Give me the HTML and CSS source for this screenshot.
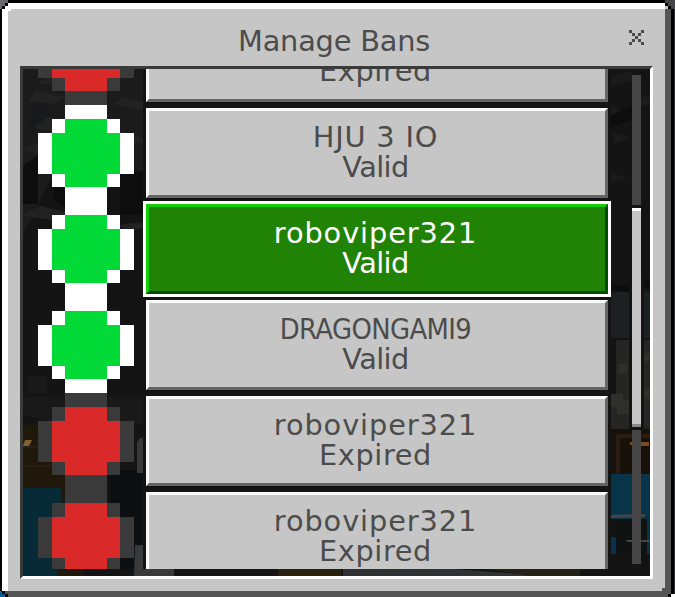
FILE: index.html
```html
<!DOCTYPE html>
<html lang="en">
<head>
<meta charset="utf-8">
<title>Manage Bans</title>
<link rel="stylesheet" href="styles.css">
</head>
<body>
<svg class="symbols" width="0" height="0" aria-hidden="true">
  <symbol id="status" viewBox="0 0 96 96">
    <path fill="var(--edge)" d="M27 0H69V14H82V28H96V69H82V82H69V96H27V82H14V69H0V28H14V14H27Z"/>
    <path fill="var(--dot)" d="M27 14H69V28H82V69H69V82H27V69H14V28H27Z"/>
  </symbol>
</svg>
<main class="dialog">
  <svg class="corners" viewBox="0 0 675 597" shape-rendering="crispEdges" aria-hidden="true">
    <path fill="#68686c" d="M0 0H8V3H5V6H2V9H0Z"/>
    <path fill="#000" d="M5 3H8V6H5ZM2 6H5V9H2Z"/>
    <path fill="#fff" d="M8 9H11V11H8Z"/>
    <path fill="#464648" d="M665 0H675V9H671V6H668V3H665Z"/>
    <path fill="#000" d="M665 3H668V6H671V9H668V6H665Z"/>
    <path fill="#c6c6c6" d="M665 6H668V9H665Z"/>
    <path fill="#005f9b" d="M0 591H5V597H0Z"/>
    <path fill="#555" d="M5 591H8V594H5Z"/>
    <path fill="#000" d="M2 591H5V594H8V597H5V594H2Z"/>
    <path fill="#555" d="M662 588H665V591H662Z"/>
    <path fill="#000" d="M668 594H671V597H668Z"/>
    <path fill="#fff" d="M671 594H675V597H671Z"/>
  </svg>
  <header class="titlebar">
    <h1 class="title">Manage Bans</h1>
    <svg class="close" viewBox="0 0 5 5" shape-rendering="crispEdges" role="img" aria-label="Close"><path fill="#4c4c4c" d="M0 0h1v1H0zM4 0h1v1H4zM1 1h1v1H1zM3 1h1v1H3zM2 2h1v1H2zM1 3h1v1H1zM3 3h1v1H3zM0 4h1v1H0zM4 4h1v1H4z"/></svg>
  </header>
  <section class="frame">
    <svg class="scene" viewBox="23 69 627 507" aria-hidden="true">
      <path fill="#141414" d="M23 69H650V576H23Z"/>
      <path fill="#1b1b1b" d="M23 69H143V172L67 145L23 235Z"/>
      <path fill="#222" d="M38 84L54 72L83 77L71 86ZM28 101L36 91L66 97L53 104ZM32 128L47 116L65 122L58 132ZM23 150L38 142L62 148L50 158ZM112 104L125 97L143 102V110ZM111 130L143 137V144L120 139ZM25 214L41 206L65 212V222L23 216ZM117 225L143 222V228L128 231Z"/>
      <path fill="#18191c" d="M26 119L39 103L55 111L32 129Z"/>
      <path fill="#0d0d0d" d="M23 166L38 155V204H23ZM120 172H143V215H120ZM54 187H65V208L54 201Z"/>
      <path fill="#191919" d="M28 376H47V393H28ZM43 333H56V345H43ZM23 397H65V424L23 415ZM107 397H143V425L107 420Z"/>
      <path fill="#21180c" d="M23 425H65V495H84V576H57V488H23Z"/>
      <path fill="#292015" d="M23 446H65V448H23ZM23 465H65V467H23Z"/>
      <path fill="#80602d" d="M25 440H32L29 446H23Z"/>
      <path fill="#062b36" d="M23 488H61V551L57 576H23Z"/>
      <path fill="#0c0f12" d="M110 470H143V569H110Z"/>
      <path fill="#393939" d="M137 443L140 438H143V473H137ZM135 545H143V569H174V576H134Z"/>
      <path fill="#27200f" d="M278 569H341V576H278Z"/>
      <path fill="#303333" d="M343 569H455L545 576H343Z"/>
      <path fill="#232018" d="M486 569H580V576H530Z"/>
      <path fill="#1b1b1b" d="M611 76L632 71V81L611 86ZM611 106L623 111L611 115ZM611 132L632 137L614 144ZM611 172L627 178L611 182ZM641 98L650 94V105H641Z"/>
      <path fill="#0d0d0d" d="M611 115L632 105V120L611 127ZM611 285H629V292L611 290ZM641 279H650V288H641Z"/>
      <path fill="#1d2021" d="M611 292H650V338H611Z"/>
      <path fill="#252523" d="M616 340H650V429H611V395H616Z"/>
      <path fill="#2f2f2d" d="M611 394H623V400H629V414H617V407H611ZM619 364H627V373H619ZM641 353H650V361H641ZM641 389H650V399H641Z"/>
      <path fill="#17110a" d="M611 429H650V475H611Z"/>
      <path fill="#2a1d12" d="M616 434H650V438H620V473H616Z"/>
      <path fill="#7c4a20" d="M630 442H649V446H641V450H637V445H630Z"/>
      <path fill="#073449" d="M611 474H650V554H611Z"/>
      <path fill="#111312" d="M611 519H647V569H641V554H616V537H611Z"/>
      <path fill="#454545" d="M611 515L645 514V517L611 518ZM625 540H650V542H628Z"/>
    </svg>
    <div class="viewport">
      <ul class="list">
        <li class="entry expired"><svg class="status" shape-rendering="crispEdges"><use href="#status"/></svg><div class="well"><button class="ban scrolled"><span class="state gone">Expired</span></button></div></li>
        <li class="entry valid"><svg class="status" shape-rendering="crispEdges"><use href="#status"/></svg><div class="well"><button class="ban"><span class="name hju">HJU 3 IO</span><span class="state ok">Valid</span></button></div></li>
        <li class="entry valid"><svg class="status" shape-rendering="crispEdges"><use href="#status"/></svg><div class="well"><button class="ban selected"><span class="name player">roboviper321</span><span class="state ok">Valid</span></button></div></li>
        <li class="entry valid"><svg class="status" shape-rendering="crispEdges"><use href="#status"/></svg><div class="well"><button class="ban"><span class="name dragon">DRAGONGAMI9</span><span class="state ok">Valid</span></button></div></li>
        <li class="entry expired"><svg class="status" shape-rendering="crispEdges"><use href="#status"/></svg><div class="well"><button class="ban"><span class="name player">roboviper321</span><span class="state gone">Expired</span></button></div></li>
        <li class="entry expired"><svg class="status" shape-rendering="crispEdges"><use href="#status"/></svg><div class="well"><button class="ban"><span class="name player">roboviper321</span><span class="state gone">Expired</span></button></div></li>
      </ul>
    </div>
    <div class="track"><div class="thumb"></div></div>
  </section>
</main>
</body>
</html>
```
FILE: styles.css
```css
* { box-sizing: border-box; }

body {
  margin: 0;
  width: 675px;
  height: 597px;
  overflow: hidden;
  background: #303134;
  font-family: "DejaVu Sans", sans-serif;
  font-size: 28.8px;
  line-height: 30px;
  color: #4c4c4c;
}

.symbols { display: block; }

.dialog {
  position: relative;
  width: 674px;
  height: 597px;
  background: #c6c6c6;
  border-style: solid;
  border-color: #000;
  border-width: 3px 3px 0 2px;
  display: flex;
  flex-direction: column;
  box-shadow: inset 6px 6px #fff, inset -6px -6px #555;
  padding: 0 0 18px 18px;
}

.corners {
  position: absolute;
  left: -2px;
  top: -3px;
  width: 675px;
  height: 597px;
}

.titlebar {
  height: 63px;
  display: flex;
  align-items: flex-start;
}

.title {
  margin: 23px 0 0 218px;
  width: 250px;
  font-size: inherit;
  font-weight: normal;
  letter-spacing: -.2px;
  white-space: nowrap;
}

.close {
  width: 15px;
  height: 15px;
  margin: 27px 0 0 141px;
}

.frame {
  position: relative;
  width: 633px;
  height: 513px;
  border: 3px solid;
  border-color: #3a3a3a #fff #fff #3a3a3a;
  display: flex;
}

.scene {
  position: absolute;
  width: 627px;
  height: 507px;
}

.viewport {
  position: relative;
  width: 588px;
  height: 500px;
  overflow: hidden;
}

.list {
  list-style: none;
  margin: -60px 0 0;
  padding: 0 0 0 15px;
}

.entry {
  display: flex;
  height: 96px;
  gap: 9px;
}

.valid { --edge: #fff; --dot: #00d936; }
.expired { --edge: #3a3a3a; --dot: #d92929; }

.status { width: 96px; height: 96px; }

.well {
  width: 468px;
  height: 96px;
  background: #131313;
  padding: 3px;
}

.ban {
  width: 462px;
  height: 90px;
  margin: 0;
  padding: 11px 0 0;
  border: 3px solid;
  border-color: #f9f9f9 #656565 #656565 #f9f9f9;
  background: #c6c6c6;
  font: inherit;
  color: inherit;
  display: flex;
  flex-direction: column;
  align-items: center;
  justify-content: flex-start;
}

.scrolled { padding-top: 41px; }

.selected {
  background: #218306;
  border-color: #17cd07 #004d00 #004d00 #17cd07;
  box-shadow: 0 0 0 3px #fff;
  color: #fff;
}

.name, .state { white-space: nowrap; margin-right: 3px; }
.player { letter-spacing: .9px; }
.gone { letter-spacing: .6px; }
.ok { letter-spacing: -.6px; }
.hju { letter-spacing: .8px; }
.dragon { font-family: "DejaVu Sans Condensed", "DejaVu Sans", sans-serif; font-stretch: condensed; letter-spacing: -.6px; }

.track {
  position: relative;
  width: 9px;
  height: 489px;
  margin: 6px 0 0 21px;
  padding-top: 133px;
  background: #464646;
}

.thumb {
  height: 219px;
  background: #c6c6c6;
  border-top: 3px solid #fff;
  border-bottom: 3px solid #888;
  box-shadow: 0 0 0 3px #131313;
}
```
